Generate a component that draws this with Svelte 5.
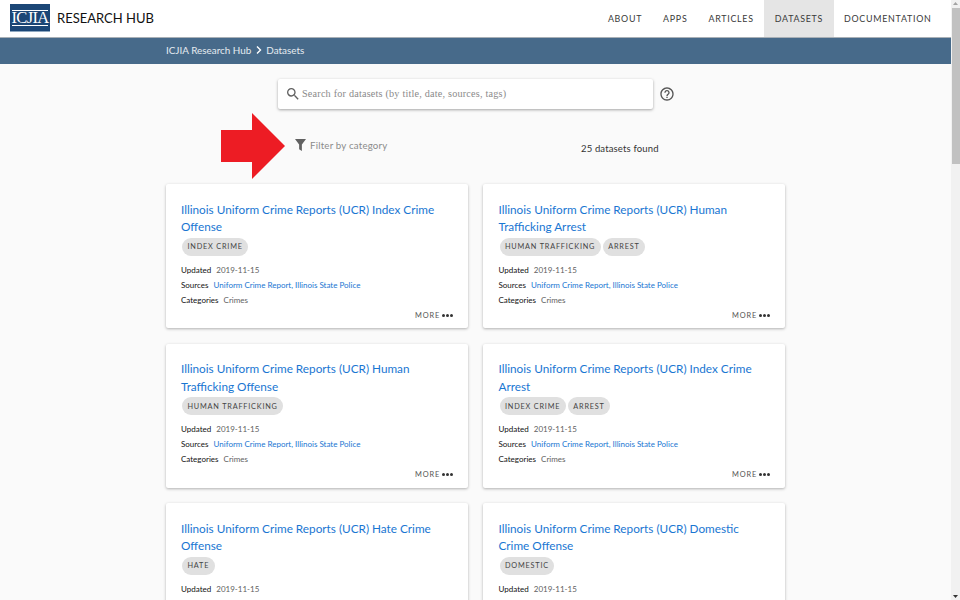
<script>
  const links = [
    { label: 'ABOUT' },
    { label: 'APPS' },
    { label: 'ARTICLES' },
    { label: 'DATASETS', active: true },
    { label: 'DOCUMENTATION' }
  ];

  const base = 'Illinois Uniform Crime Reports (UCR) ';
  const datasets = [
    { title: base + 'Index Crime Offense', tags: ['INDEX CRIME'] },
    { title: base + 'Human Trafficking Arrest', tags: ['HUMAN TRAFFICKING', 'ARREST'] },
    { title: base + 'Human Trafficking Offense', tags: ['HUMAN TRAFFICKING'] },
    { title: base + 'Index Crime Arrest', tags: ['INDEX CRIME', 'ARREST'] },
    { title: base + 'Hate Crime Offense', tags: ['HATE'] },
    { title: base + 'Domestic Crime Offense', tags: ['DOMESTIC'] }
  ];
</script>

<div class="window">
  <div class="page">
    <header class="topbar">
      <div class="brand">
        <div class="logo"><span>ICJIA</span></div>
        <span class="brand-name">RESEARCH HUB</span>
      </div>
      <nav class="links">
        {#each links as l}
          <span class="link" class:active={l.active}>{l.label}</span>
        {/each}
      </nav>
    </header>

    <div class="crumbs">
      <div class="crumbs-inner">
        <span>ICJIA Research Hub</span>
        <svg width="9" height="10" viewBox="0 0 9 10"><path d="M3 1.5 L6.5 5 L3 8.5" fill="none" stroke="#fff" stroke-width="1.4" /></svg>
        <span>Datasets</span>
      </div>
    </div>

    <main class="content">
      <div class="search-row">
        <div class="search">
          <svg width="16" height="16" viewBox="0 0 24 24"><path fill="#616161" d="M15.5 14h-.79l-.28-.27A6.47 6.47 0 0 0 16 9.5 6.5 6.5 0 1 0 9.5 16c1.61 0 3.09-.59 4.23-1.57l.27.28v.79l5 4.99L20.49 19l-4.99-5zm-6 0C7.01 14 5 11.99 5 9.5S7.01 5 9.5 5 14 7.01 14 9.5 11.99 14 9.5 14z" /></svg>
          <span class="placeholder">Search for datasets (by title, date, sources, tags)</span>
        </div>
        <svg class="help" width="16" height="16" viewBox="0 0 24 24"><path fill="#555" d="M11 18h2v-2h-2v2zm1-16C6.48 2 2 6.48 2 12s4.48 10 10 10 10-4.48 10-10S17.52 2 12 2zm0 18c-4.41 0-8-3.59-8-8s3.59-8 8-8 8 3.59 8 8-3.59 8-8 8zm0-14c-2.21 0-4 1.79-4 4h2c0-1.1.9-2 2-2s2 .9 2 2c0 2-3 1.75-3 5h2c0-2.25 3-2.5 3-5 0-2.21-1.79-4-4-4z" /></svg>
      </div>

      <div class="filter-row">
        <div class="filter">
          <svg width="11" height="12" viewBox="0 0 12 13"><path fill="#616161" d="M0 0 H12 L7.5 6 V13 L4.5 11 V6 Z" /></svg>
          <span>Filter by category</span>
        </div>
        <div class="found">25 datasets found</div>
      </div>

      <div class="grid">
        {#each datasets as d}
          <article class="card">
            <h2 class="title">{d.title}</h2>
            <div class="tags">
              {#each d.tags as t}
                <span class="chip">{t}</span>
              {/each}
            </div>
            <div class="meta"><b>Updated</b> <span>2019-11-15</span></div>
            <div class="meta"><b>Sources</b> <span class="src">Uniform Crime Report, Illinois State Police</span></div>
            <div class="meta"><b>Categories</b> <span>Crimes</span></div>
            <div class="more">MORE <i class="dots"><em></em><em></em><em></em></i></div>
          </article>
        {/each}
      </div>
    </main>

    <!-- flèche rouge ajoutée sur la capture -->
    <svg class="arrow" width="64" height="66" viewBox="0 0 64 66"><path fill="#ed1c24" d="M0 17 H31 V0 L64 33 L31 66 V49 H0 Z" /></svg>
  </div>

  <div class="scrollbar">
    <svg width="9" height="8" viewBox="0 0 9 8"><path fill="#a3a3a3" d="M4.5 2 L7 5 H2 Z" /></svg>
    <div class="thumb"></div>
    <svg class="down" width="9" height="8" viewBox="0 0 9 8"><path fill="#333" d="M2 3 H7 L4.5 6 Z" /></svg>
  </div>
</div>

<style>
  :global(body) { margin: 0; background: #fafafa; }

  .window { display: flex; width: 960px; height: 600px; overflow: hidden; font-family: Lato, "Liberation Sans", sans-serif; }
  .page { position: relative; width: 951px; flex: none; background: #fafafa; overflow: hidden; }

  .topbar { display: flex; justify-content: space-between; height: 37px; padding-left: 10px; background: #fff; border-bottom: 1px solid #a9b0b6; }
  .brand { display: flex; align-items: center; gap: 7px; padding-bottom: 1px; }
  .logo { display: flex; align-items: center; justify-content: center; width: 40px; height: 28px; background: #1b4676; border-bottom: 1px solid #8fa8c0; box-sizing: border-box; }
  .logo span { font-family: "Liberation Serif", serif; font-size: 16.5px; letter-spacing: -0.7px; color: #fff; border-top: 1px solid #fff; border-bottom: 1px solid #fff; line-height: 14px; }
  .brand-name { font-size: 13px; color: #111; }

  .links { display: flex; padding-right: 9px; }
  .link { display: flex; align-items: center; padding: 0 10.5px 1px; font-size: 8.9px; letter-spacing: 0.72px; color: #3a3a3a; }
  .link.active { background: #e5e5e5; }

  .crumbs { height: 26px; background: #476a8a; }
  .crumbs-inner { display: flex; align-items: center; gap: 3px; height: 24px; padding-left: 166px; font-size: 9.9px; color: #e6ecf1; }

  .content { padding: 15px 0 0 166px; width: 620px; }
  .search-row { display: flex; align-items: center; padding-left: 112px; }
  .search { display: flex; align-items: center; gap: 1px; width: 368px; height: 30px; padding-left: 7px; background: #fff; border-radius: 2px; box-shadow: 0 1px 3px rgba(0, 0, 0, 0.35); }
  .placeholder { font-family: "Liberation Serif", serif; font-size: 10.2px; letter-spacing: 0.2px; color: #8a8a8a; padding-bottom: 1px; }
  .help { margin-left: 6px; }

  .filter-row { display: flex; height: 75px; padding-left: 129px; }
  .filter { display: flex; align-items: center; gap: 4px; width: 286px; height: 72px; font-size: 9.7px; letter-spacing: 0.2px; color: #8b8b8b; }
  .found { margin-top: 34px; font-size: 9.5px; letter-spacing: 0.15px; color: #333; }

  .grid { display: grid; grid-template-columns: 302px 302px; gap: 15.5px 15px; }
  .card { display: flex; flex-direction: column; height: 144px; box-sizing: border-box; padding: 16.5px 15px 0; background: #fff; border-radius: 2px; box-shadow: 0 1px 3px rgba(0, 0, 0, 0.3); }
  .card:nth-child(even) { padding-left: 15.5px; }
  .title { margin: 0; font-size: 11.75px; font-weight: 400; line-height: 17.5px; color: #1976d2; }
  .tags { display: flex; gap: 2px; padding: 2px 0 0 1px; }
  .chip { display: flex; align-items: center; height: 18px; padding: 0 5.5px; border-radius: 9px; background: #e0e0e0; font-size: 7.3px; letter-spacing: 0.8px; color: #444; }
  .meta { margin-top: 6px; height: 9px; line-height: 9px; font-size: 8px; color: #616161; white-space: nowrap; }
  .tags + .meta { margin-top: 10px; }
  .meta b { font-weight: 400; color: #111; margin-right: 3px; }
  .src { color: #1976d2; }
  .more { display: flex; align-items: center; justify-content: flex-end; gap: 2px; margin-top: 6px; font-size: 7.4px; letter-spacing: 0.85px; color: #555; }
  .dots { display: flex; gap: 1px; }
  .dots em { width: 3px; height: 3px; border-radius: 50%; background: #333; }

  .arrow { position: absolute; left: 221px; top: 113px; }

  .scrollbar { display: flex; flex-direction: column; align-items: center; flex: 1; background: #f1f1f1; }
  .thumb { width: 8px; height: 156px; background: #c1c1c1; }
  .down { margin-top: auto; }
</style>
